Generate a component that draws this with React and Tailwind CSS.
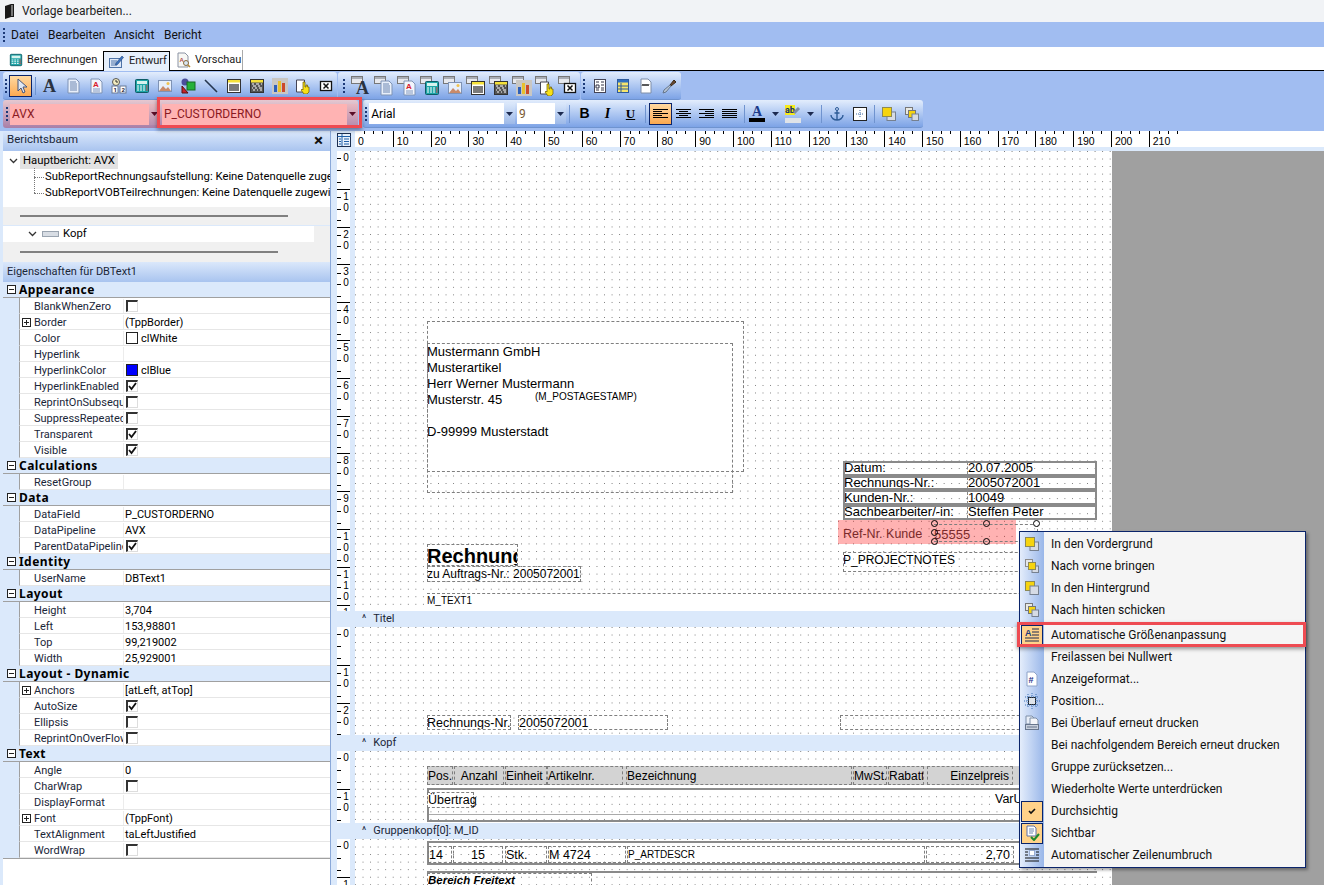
import { Fragment } from "react";

const ui = "[font-family:'Roboto',sans-serif]";
const arial = "[font-family:'Liberation_Sans',Arial,sans-serif]";

const G = {
  arrow: <path d="M5 1v12l3-3 2 5 2-1-2-5h4z" fill="#dfe7f3" stroke="#45557a" />,
  bigA: <text x="1" y="14" fontFamily="Liberation Serif" fontWeight="700" fontSize="18" fill="#2a3340">A</text>,
  memo: <><path d="M3 1h8l3 3v11H3z" fill="#e8effa" stroke="#7f93b5" /><path d="M5 4h6M5 6h7M5 8h7M5 10h7M5 12h7" stroke="#6d86b0" /></>,
  rtf: <><path d="M3 1h8l3 3v11H3z" fill="#f2f5fb" stroke="#7f93b5" /><text x="5" y="9" fontFamily="Liberation Sans" fontWeight="700" fontSize="8" fill="#d8202a">A</text><path d="M5 11h7M5 13h7" stroke="#8098c0" /></>,
  vars: <><circle cx="5" cy="4" r="3.5" fill="#f4edc0" stroke="#555" /><path d="M5 2v2h2" stroke="#333" fill="none" /><rect x="1" y="8" width="6" height="7" fill="#fff" stroke="#6a7a95" /><rect x="9" y="8" width="6" height="7" fill="#fff" stroke="#6a7a95" /><text x="2.5" y="14" fontSize="6" fontWeight="700" fill="#223">1</text><text x="10.5" y="14" fontSize="6" fontWeight="700" fill="#223">2</text></>,
  calc: <><rect x="1.5" y="1.5" width="13" height="13" rx="1" fill="#1fa6a8" stroke="#0d5c66" /><rect x="3" y="3" width="10" height="3" fill="#d7f3ee" /><path d="M3 8h2M6 8h2M9 8h2M3 10h2M6 10h2M9 10h2M3 12h2M6 12h2M9 12h2" stroke="#fff" /><path d="M12 8h1.5M12 10h1.5M12 12h1.5" stroke="#e33" /></>,
  image: <><rect x="1.5" y="2.5" width="13" height="11" fill="#e8f0fb" stroke="#7f93b5" /><path d="M2 13l4-5 3 3 2-2 3 4z" fill="#c98a6a" /><circle cx="11" cy="5.5" r="1.5" fill="#f1c24d" /></>,
  shape: <><circle cx="5" cy="4" r="3.5" fill="#4b4f9c" /><rect x="7" y="4" width="8" height="8" fill="#26b13a" stroke="#176a25" /><path d="M2 15V8l6 7z" fill="#c8242b" stroke="#5a1010" /></>,
  line: <path d="M2 2l12 12" stroke="#26364f" strokeWidth="1.6" />,
  barcode: <><rect x="1.5" y="1.5" width="13" height="13" fill="#fff" stroke="#333" /><rect x="2" y="2" width="12" height="2.5" fill="#f6e23a" /><path d="M4 6v7M6 6v7M8 6v7M10 6v7M12 6v7" stroke="#222" strokeWidth="1.2" /></>,
  code2d: <><rect x="1.5" y="1.5" width="13" height="13" fill="#555" stroke="#333" /><rect x="2" y="2" width="12" height="2.5" fill="#f6e23a" /><path d="M3 6h2M7 6h3M12 6h1M4 8h3M9 8h2M3 10h1M6 10h2M10 10h3M4 12h2M8 12h1M11 12h2" stroke="#fff" /></>,
  chart: <><rect x="0" y="0" width="16" height="16" fill="#c9c7c3" /><rect x="2" y="7" width="3" height="7" fill="#2e5fb8" /><rect x="6" y="3" width="3" height="11" fill="#e7c12e" /><rect x="10" y="5" width="3" height="9" fill="#cc4a2a" /></>,
  hand: <><path d="M1.5 2h8v12h-8z" fill="#fff" stroke="#445" /><path d="M8 4h2v5h1V7h1.5v2H14v5l-2 2H9l-3-4 1-1 1 1z" fill="#f7e017" stroke="#6a5a00" strokeWidth=".7" /></>,
  xbox: <><rect x="2.5" y="3.5" width="11" height="9" fill="#fff" stroke="#111" strokeWidth="1.3" /><path d="M5.5 5.5l5 5M10.5 5.5l-5 5" stroke="#111" strokeWidth="1.5" /></>,
  grid: <><rect x="2.5" y="1.5" width="11" height="13" fill="#fff" stroke="#445" /><path d="M4 4h3M4 7h3v3H4zM9 4h3M9 7h3M9 10h3M4 12h3M9 12h3" stroke="#334" fill="none" /></>,
  table: <><rect x="2.5" y="1.5" width="11" height="13" fill="#f7e56c" stroke="#2d5a9c" /><rect x="3" y="2" width="10" height="2.5" fill="#2f6fc2" /><path d="M6 5v9M3 8h10M3 11h10" stroke="#2d5a9c" /></>,
  wave: <><path d="M3 1h7l3 3v11H3z" fill="#fff" stroke="#7f8ea8" /><path d="M4 8l1-2 1 2 1-2 1 2 1-2 1 2 1-2" stroke="#333" fill="none" /></>,
  brush: <><path d="M9 7l4-5 2 2-5 4z" fill="#6b4a32" stroke="#3a2818" /><path d="M9 7l1 1-5 6-3 1 1-3z" fill="#b9c6d6" stroke="#66768c" /></>,
  front: <><rect x="6" y="6" width="8.5" height="8.5" fill="#d6dbe5" stroke="#76808f" /><rect x="1.5" y="1.5" width="9" height="9" fill="#f6d40f" stroke="#8d8a55" /></>,
  forward: <><rect x="1.5" y="1.5" width="7" height="7" fill="#e5e7ea" stroke="#8c8c8c" /><rect x="8" y="8" width="6.5" height="6.5" fill="#d6dbe5" stroke="#76808f" /><rect x="4.5" y="4.5" width="7" height="7" fill="#f6d40f" stroke="#8d8a55" /></>,
  back: <><rect x="1.5" y="1.5" width="9" height="9" fill="#f6d40f" stroke="#8d8a55" /><rect x="6" y="6" width="8.5" height="8.5" fill="#d6dbe5" stroke="#76808f" /></>,
  backward: <><rect x="1.5" y="1.5" width="7" height="7" fill="#e9e9e2" stroke="#777" /><rect x="4.5" y="4.5" width="7" height="7" fill="#f6d40f" stroke="#777" /><rect x="8" y="8" width="6.5" height="6.5" fill="#d6dbe5" stroke="#76808f" /></>,
  anchor: <><circle cx="8" cy="3" r="1.5" fill="none" stroke="#2d5b96" /><path d="M8 4.5V14M2 9c0 3 3 5 6 5s6-2 6-5M5.5 7h5" stroke="#2d5b96" strokeWidth="1.4" fill="none" /></>,
  border: <><rect x="1.5" y="1.5" width="13" height="13" fill="#fff" stroke="#222" /><path d="M8 4v8M4 8h8" stroke="#3a6aa8" strokeDasharray="1 1" /></>,
  autosize: <><text x="1" y="9" fontFamily="Liberation Sans" fontWeight="700" fontSize="9" fill="#1c3a78">A</text><path d="M8 2h7M8 5h7M8 8h7M1 11h14M1 14h14" stroke="#1c2a50" /></>,
  hash: <><path d="M3 1h7l3 3v11H3z" fill="#fff" stroke="#8fa4c8" /><text x="4.5" y="12" fontFamily="Liberation Sans" fontWeight="700" fontSize="9" fill="#1c2f88">#</text></>,
  pos: <><rect x="4.5" y="4.5" width="7" height="7" fill="#dfe4ea" stroke="#222" /><path d="M8 0v3M8 13v3M0 8h3M13 8h3M1 4h14M1 12h14M4 1v14M12 1v14" stroke="#3f72b5" strokeDasharray="1 1" /></>,
  print: <><path d="M2 1h6l2 2v6H2z" fill="#e8eef8" stroke="#7e90a8" /><path d="M6 3h6l2 2v5H6z" fill="#f3f5f9" stroke="#7e90a8" /><rect x="1.5" y="9.5" width="13" height="5" fill="#c8d0dc" stroke="#66758c" /><path d="M3 12h10" stroke="#66758c" /></>,
  check: <path d="M5 8l2 2 4-4" stroke="#111" strokeWidth="1.6" fill="none" />,
  visible: <><path d="M3 1h7l2 2v8H3z" fill="#fff" stroke="#5c70a8" /><path d="M5 4h5M5 6h5M5 8h4" stroke="#6d86b0" /><path d="M7 12l3 3 5-6" stroke="#1d8a2d" strokeWidth="2" fill="none" /></>,
  wrap: <><path d="M1 2h14M1 5h3M1 8h3M12 5h3M12 8h3M1 11h14M1 14h14" stroke="#111" /><rect x="5.5" y="3.5" width="5" height="5" fill="#fff" stroke="#5570a8" strokeDasharray="1 1" /></>,
  tree: <><rect x="1.5" y="1.5" width="13" height="13" fill="#e8f1fc" stroke="#1c2f50" /><path d="M6 2v12M1.5 4.5h13M8 7h5M8 9.5h5M8 12h5M3 7h2M3 9.5h2M3 12h2" stroke="#1f5fa8" /></>,
  edit: <><rect x="1.5" y="4.5" width="12" height="9" fill="#dfe9f8" stroke="#4f74a8" /><path d="M3 7h6M3 9h5M3 11h6" stroke="#4f74a8" /><path d="M8 9l6-7 1.5 1.5-6 7-2 .5z" fill="#3d74c0" stroke="#24467c" strokeWidth=".6" /></>,
  preview: <><path d="M3 1h7l3 3v11H3z" fill="#f7f7f4" stroke="#8b93a3" /><text x="4.5" y="10" fontFamily="Liberation Sans" fontWeight="700" fontSize="6" fill="#b24a4a">A</text><circle cx="11" cy="11" r="2.5" fill="#d7e6f5" stroke="#8a6a3a" /><path d="M13 13l2 2" stroke="#b5852f" strokeWidth="1.5" /></>,
};

function Ic({ n, size = 16 }) {
  return <svg viewBox="0 0 16 16" width={size} height={size} className="shrink-0">{G[n]}</svg>;
}

// field tools in the second group sit on a small grey tab
function DbIc({ n }) {
  return (
    <svg viewBox="0 0 20 20" width={20} height={20} className="shrink-0">
      <rect x="0.5" y="0.5" width="11" height="7" fill="#e7e9ee" stroke="#777" />
      <rect x="1" y="1" width="10" height="2" fill="#a9adb5" />
      <svg x="4" y="4" width="16" height="16" viewBox="0 0 16 16">{G[n]}</svg>
    </svg>
  );
}

function Grip({ className = "" }) {
  return (
    <div className={"flex flex-col gap-[2px] " + className}>
      <span className="w-[2px] h-[2px] bg-[#1c3a78]" />
      <span className="w-[2px] h-[2px] bg-[#1c3a78]" />
      <span className="w-[2px] h-[2px] bg-[#1c3a78]" />
      <span className="w-[2px] h-[2px] bg-[#1c3a78]" />
    </div>
  );
}

function Sep({ w = "w-[6px]" }) {
  return <div className={w + " flex justify-center shrink-0"}><span className="w-px h-[18px] bg-[#6f93cf]" /></div>;
}

function Cell({ children, w = "w-[23px]", on }) {
  return (
    <div className={w + " h-[22px] flex items-center justify-center shrink-0 " + (on ? "bg-gradient-to-b from-[#ffd9a0] to-[#fba94f] border border-[#0a246a]" : "")}>
      {children}
    </div>
  );
}

function Caret({ color = "#1c2a50" }) {
  return <svg width="7" height="4" viewBox="0 0 7 4"><path d="M0 0h7L3.5 4z" fill={color} /></svg>;
}

function Combo({ text, w, pink, orange }) {
  return (
    <div className={w + " h-[21px] flex items-center shrink-0 " + (pink ? "bg-[#ffb3b3] text-[#8a1a22]" : "bg-white")}>
      <span className={"flex-1 pl-[2px] text-[12px] " + (orange ? "text-[#7a5a30]" : "")}>{text}</span>
      <span className={"w-[11px] h-full flex items-center justify-center " + (pink ? "bg-gradient-to-b from-[#e8b8c0] to-[#b890b0]" : "bg-gradient-to-b from-[#dbe8fb] to-[#9db9e8]")}>
        <Caret color={pink ? "#5a0f28" : "#1c2a50"} />
      </span>
    </div>
  );
}

function Lines({ kind }) {
  const pos = { left: "items-start", center: "items-center", right: "items-end", full: "items-stretch" }[kind];
  return (
    <span className={"w-[15px] flex flex-col gap-[1px] " + pos}>
      {[15, 9, 15, 9, 15].map((w, i) => (
        <span key={i} className={"h-px bg-black " + (kind === "full" || w === 15 ? "w-[15px]" : "w-[9px]")} />
      ))}
    </span>
  );
}

function Toolbars() {
  const tb = "flex items-center rounded-[3px] bg-gradient-to-b from-[#e3edfc] to-[#7da3e6] border-b border-[#6f93cf]";
  return (
    <div className="h-[60px] shrink-0 bg-[#a1bdf1] pl-[3px] pt-px">
      <div className="flex h-[28px] gap-px">
        <div className={tb + " w-[334px] pl-[2px]"}>
          <Grip className="w-[4px]" />
          <Cell on><Ic n="arrow" /></Cell>
          <Sep />
          {["bigA", "memo", "rtf", "vars", "calc", "image", "shape", "line", "barcode", "code2d", "chart", "hand", "xbox"].map((n) => <Cell key={n}><Ic n={n} /></Cell>)}
        </div>
        <div className={tb + " w-[242px] pl-[5px]"}>
          <Grip className="w-[6px]" />
          {["bigA", "memo", "rtf", "calc", "image", "barcode", "code2d", "chart", "hand", "xbox"].map((n) => <Cell key={n}><DbIc n={n} /></Cell>)}
        </div>
        <div className={tb + " w-[100px] pl-[2px]"}>
          <Grip className="w-[5px]" />
          {["grid", "table", "wave", "brush"].map((n) => <Cell key={n}><Ic n={n} /></Cell>)}
        </div>
      </div>
      <div className="flex h-[28px]">
        <div className="flex items-center w-[355px] rounded-[3px] bg-gradient-to-b from-[#e6c8d0] to-[#a97fa8] pl-[3px] gap-[2px]">
          <Grip className="w-[2px]" />
          <Combo text="AVX" w="w-[150px]" pink />
          <Combo text="P_CUSTORDERNO" w="w-[196px]" pink />
        </div>
        <div className={tb + " ml-[5px] w-[560px] pl-[2px]"}>
          <Grip className="w-[5px]" />
          <Combo text="Arial" w="w-[146px]" />
          <div className="w-[2px]" />
          <Combo text="9" w="w-[49px]" orange />
          <Sep w="w-[7px]" />
          <Cell><b className={arial + " text-[14px] font-black"}>B</b></Cell>
          <Cell><i className="[font-family:'Liberation_Serif',serif] text-[14px] font-bold">I</i></Cell>
          <Cell><u className="[font-family:'Liberation_Serif',serif] text-[13px] font-bold">U</u></Cell>
          <Sep w="w-[7px]" />
          <Cell on><Lines kind="left" /></Cell>
          <Cell><Lines kind="center" /></Cell>
          <Cell><Lines kind="right" /></Cell>
          <Cell><Lines kind="full" /></Cell>
          <Sep />
          <Cell w="w-[20px]">
            <span className="flex flex-col items-center leading-none">
              <span className="[font-family:'Liberation_Serif',serif] font-bold text-[14px] text-[#1c3a8a] leading-[13px]">A</span>
              <span className="w-[16px] h-[4px] bg-black" />
            </span>
          </Cell>
          <Cell w="w-[16px]"><Caret /></Cell>
          <Cell w="w-[20px]">
            <span className="relative w-[16px] h-[18px] block">
              <span className="absolute left-0 top-0 bg-[#f6ea1a] text-[9px] leading-[10px] text-[#14306a] font-bold">ab</span>
              <span className="absolute left-0 bottom-0 w-[16px] h-[5px] bg-[#dfe3e8]" />
              <span className="absolute left-[8px] top-[4px] w-[7px] h-[3px] bg-[#7d8da5] -rotate-45" />
            </span>
          </Cell>
          <Cell w="w-[15px]"><Caret /></Cell>
          <Sep w="w-[7px]" />
          <Cell><Ic n="anchor" /></Cell>
          <Cell><Ic n="border" /></Cell>
          <Sep />
          <Cell><Ic n="front" /></Cell>
          <Cell><Ic n="backward" /></Cell>
        </div>
      </div>
    </div>
  );
}

function Check({ on }) {
  return (
    <span className="w-[12px] h-[12px] border-t-2 border-l-2 border-t-[#333] border-l-[#333] border-r border-b border-r-[#ddd] border-b-[#ddd] bg-white flex items-center justify-center">
      {on && <svg width="9" height="9" viewBox="0 0 9 9"><path d="M1 4l2.5 3L8 1" stroke="#111" strokeWidth="1.8" fill="none" /></svg>}
    </span>
  );
}

function PlusBox({ minus }) {
  return (
    <span className="w-[9px] h-[9px] border border-[#222] bg-white relative shrink-0">
      <span className="absolute left-px right-px top-[3px] h-px bg-[#222]" />
      {!minus && <span className="absolute top-px bottom-px left-[3px] w-px bg-[#222]" />}
    </span>
  );
}

const props = [
  { s: "Appearance" },
  { n: "BlankWhenZero", c: 0 },
  { n: "Border", v: "(TppBorder)", p: 1 },
  { n: "Color", v: "clWhite", sw: "bg-white" },
  { n: "Hyperlink" },
  { n: "HyperlinkColor", v: "clBlue", sw: "bg-[#0000ff]" },
  { n: "HyperlinkEnabled", c: 1 },
  { n: "ReprintOnSubsequent", c: 0 },
  { n: "SuppressRepeatedValues", c: 0 },
  { n: "Transparent", c: 1 },
  { n: "Visible", c: 1 },
  { s: "Calculations" },
  { n: "ResetGroup" },
  { s: "Data" },
  { n: "DataField", v: "P_CUSTORDERNO" },
  { n: "DataPipeline", v: "AVX" },
  { n: "ParentDataPipeline", c: 1 },
  { s: "Identity" },
  { n: "UserName", v: "DBText1" },
  { s: "Layout" },
  { n: "Height", v: "3,704" },
  { n: "Left", v: "153,98801" },
  { n: "Top", v: "99,219002" },
  { n: "Width", v: "25,929001" },
  { s: "Layout - Dynamic" },
  { n: "Anchors", v: "[atLeft, atTop]", p: 1 },
  { n: "AutoSize", c: 1 },
  { n: "Ellipsis", c: 0 },
  { n: "ReprintOnOverFlow", c: 0 },
  { s: "Text" },
  { n: "Angle", v: "0" },
  { n: "CharWrap", c: 0 },
  { n: "DisplayFormat" },
  { n: "Font", v: "(TppFont)", p: 1 },
  { n: "TextAlignment", v: "taLeftJustified" },
  { n: "WordWrap", c: 0 },
];

function PropGrid() {
  return (
    <div className="text-[11px] leading-[15px] border-b border-[#a0a0a0]">
      {props.map((r, i) =>
        r.s ? (
          <div key={i} className="h-[16px] bg-[#dbe9fb] flex items-center border-b border-[#a0a0a0] pl-[4px] gap-[3px]">
            <PlusBox minus />
            <b className="[font-family:'Noto_Sans',sans-serif] text-[12px] font-bold tracking-[0.45px]">{r.s}</b>
          </div>
        ) : (
          <div key={i} className="h-[16px] flex bg-[#dbe9fb]">
            <div className="w-[16px] shrink-0" />
            <div className="flex flex-1 bg-white border-l border-[#a0a0a0] border-b border-b-[#e6e6e6] min-w-0 pt-px">
              <div className="w-[104px] shrink-0 flex items-center overflow-hidden whitespace-nowrap border-r border-[#ececec] pl-[2px]">
                <span className="w-[12px] shrink-0 flex items-center">{r.p && <PlusBox />}</span>
                <span className="text-[#1a2638]">{r.n}</span>
              </div>
              <div className="flex-1 flex items-center pl-px gap-[3px] whitespace-nowrap">
                {r.c !== undefined && <span className="ml-px"><Check on={r.c === 1} /></span>}
                {r.sw && <span className="ml-px"><span className={"block w-[12px] h-[12px] border border-[#222] " + r.sw} /></span>}
                {r.v && <span>{r.v}</span>}
              </div>
            </div>
          </div>
        )
      )}
    </div>
  );
}

function PaneHeader({ children, close, size = "text-[11px]" }) {
  return (
    <div className={"h-[20px] shrink-0 flex items-center justify-between px-[4px] bg-gradient-to-b from-[#dbe8fb] to-[#a9c4ef] text-[#1a2638] " + size}>
      <span>{children}</span>
      {close && <span className="pr-[3px] text-[17px] font-bold leading-none text-[#111]">×</span>}
    </div>
  );
}

function LeftPane() {
  return (
    <div className="w-[331px] shrink-0 pl-[3px] bg-[#dbe9fb] border-r border-[#8aa8d8] flex flex-col overflow-hidden">
      <PaneHeader close size="text-[11.5px] pb-[2px]">Berichtsbaum</PaneHeader>
      <div className="relative h-[56px] shrink-0 bg-white text-[11.3px] leading-[16px] whitespace-nowrap overflow-hidden">
        <div className="flex items-center h-[16px] mt-[2px] pl-[6px]">
          <svg width="9" height="6" viewBox="0 0 9 6"><path d="M1 1l3.5 3.5L8 1" stroke="#333" strokeWidth="1.3" fill="none" /></svg>
          <span className="ml-[2px] bg-[#e2e2e2] px-[3px]">Hauptbericht: AVX</span>
        </div>
        <div className="pl-[42px]">SubReportRechnungsaufstellung: Keine Datenquelle zugewiesen</div>
        <div className="pl-[42px]">SubReportVOBTeilrechnungen: Keine Datenquelle zugewiesen</div>
        <span className="absolute left-[31px] top-[17px] h-[25px] border-l border-dotted border-[#777]" />
        <span className="absolute left-[31px] top-[26px] w-[10px] border-t border-dotted border-[#777]" />
        <span className="absolute left-[31px] top-[42px] w-[10px] border-t border-dotted border-[#777]" />
      </div>
      <div className="h-[19px] shrink-0 bg-[#f0f0f0] flex items-center pl-[17px] border-b border-[#dbe9fb]">
        <span className="w-[268px] h-[2px] bg-[#808080]" />
      </div>
      <div className="h-[16px] shrink-0 bg-[#f0f0f0]">
        <div className="w-[311px] h-full bg-white flex items-center pl-[25px] text-[11.3px]">
          <svg width="9" height="6" viewBox="0 0 9 6"><path d="M1 1l3.5 3.5L8 1" stroke="#333" strokeWidth="1.3" fill="none" /></svg>
          <span className="ml-[5px] w-[17px] h-[6px] bg-[#d8dde4] border border-[#9aa4b0]" />
          <span className="ml-[4px]">Kopf</span>
        </div>
      </div>
      <div className="h-[20px] shrink-0 bg-[#f0f0f0] flex items-center pl-[17px]">
        <span className="w-[258px] h-[2px] bg-[#808080]" />
      </div>
      <PaneHeader>Eigenschaften für DBText1</PaneHeader>
      <div className="flex-1 bg-white overflow-hidden"><PropGrid /></div>
    </div>
  );
}

function VRuler({ count }) {
  return (
    <div className="w-[24px] shrink-0 bg-[#dbe9fb] overflow-hidden pl-[6px] pr-[5px]">
      <div className="bg-white h-full overflow-hidden">
        {Array.from({ length: count }, (_, i) => (
          <div key={i} className={"h-[37.8px] flex " + (i > 0 ? "border-t border-black" : "")}>
            <div className="w-[5px] flex flex-col justify-around pt-[2px]">
              <span className="w-[4px] h-px bg-black" />
              <span className="w-[4px] h-px bg-black" />
              <span className="w-[4px] h-px bg-black" />
            </div>
            <div className={arial + " flex-1 flex flex-col items-center pt-[1px] text-[10px] leading-[11px] text-black"}>
              {String(i * 10).split("").map((d, j) => <span key={j}>{d}</span>)}
            </div>
          </div>
        ))}
      </div>
    </div>
  );
}

function HRuler() {
  return (
    <div className="h-[20px] shrink-0 bg-[#dbe9fb] flex">
      <div className="w-[24px] shrink-0 pl-[5px] pt-[1px]"><Ic n="tree" /></div>
      <div className="flex-1 h-[16px] bg-white flex overflow-hidden">
        {Array.from({ length: 22 }, (_, i) => (
          <div key={i} className={"w-[37.8px] shrink-0 relative " + (i > 0 ? "border-l border-black" : "")}>
            <span className="absolute left-[9px] top-0 w-px h-[3px] bg-black" />
            <span className="absolute left-[18px] top-0 w-px h-[3px] bg-black" />
            <span className="absolute left-[27px] top-0 w-px h-[3px] bg-black" />
            <span className={arial + " absolute left-[3px] top-[4px] text-[10.5px] leading-[12px] text-black"}>{i * 10}</span>
          </div>
        ))}
      </div>
    </div>
  );
}

function BandHead({ children }) {
  return (
    <div className="h-[16px] w-[781px] shrink-0 bg-[#dbe9fb] flex items-center pl-[31px] text-[11px] text-[#1a2638] gap-[7px]">
      <span className="text-[10px] leading-none">^</span>
      <span>{children}</span>
    </div>
  );
}

const dots = "bg-white bg-[radial-gradient(circle_at_0.5px_0.5px,#777_0.5px,transparent_0.6px)] bg-[length:7.56px_7.56px]";
const dash = "border border-dashed border-[#7f7f7f]";

// fields on the report page are placed at their own coordinates
function F({ className = "", children }) {
  return <div className={"absolute whitespace-nowrap overflow-hidden text-black " + arial + " " + className}>{children}</div>;
}

function Band({ h, rulers, children }) {
  return (
    <div className={"flex w-[781px] shrink-0 overflow-hidden " + h}>
      <VRuler count={rulers} />
      <div className={"relative flex-1 " + dots}>{children}</div>
    </div>
  );
}

function InfoRow({ a, b }) {
  return (
    <div className="h-[14.7px] border-2 border-[#8a8a8a] flex items-center text-[13px] leading-[12px] overflow-hidden whitespace-nowrap">
      <span className="w-[124px] shrink-0 border-r border-dashed border-[#888] -ml-px">{a}</span>
      <span>{b}</span>
    </div>
  );
}

function Handle({ className }) {
  return <span className={"absolute w-[7px] h-[7px] rounded-full border border-black " + className} />;
}

function Canvas() {
  return (
    <div className="flex-1 min-w-0 flex flex-col overflow-hidden">
      <HRuler />
      <div className="flex-1 bg-[#a0a0a0] flex flex-col overflow-hidden">
        <Band h="h-[460px]" rulers={13}>
          <F className={"left-[72px] top-[170px] w-[317px] h-[151px] bg-white " + dash} />
          <F className={"left-[72px] top-[192px] w-[306px] h-[150px] text-[13px] leading-[16px] " + dash}>
            <div className="-ml-px">Mustermann GmbH<br />Musterartikel<br />Herr Werner Mustermann<br />Musterstr. 45<br /><br />D-99999 Musterstadt</div>
          </F>
          <F className="left-[180px] top-[239px] text-[10px] leading-[14px]">(M_POSTAGESTAMP)</F>
          <F className={"left-[72px] top-[393px] w-[91px] h-[22px] text-[20px] leading-[22px] font-bold [text-indent:-1px] " + dash}>Rechnung</F>
          <F className={"left-[72px] top-[415px] w-[154px] h-[16px] text-[12px] leading-[15px] [text-indent:-1px] " + dash}>zu Auftrags-Nr.: 2005072001</F>
          <F className="left-[72px] top-[442px] w-[685px] h-[18px] bg-white border-t border-dashed border-[#7f7f7f] text-[10px] leading-[14px]">M_TEXT1</F>

          <div className={"absolute left-[488px] top-[310px] w-[254px] flex flex-col text-black " + arial}>
            <InfoRow a="Datum:" b="20.07.2005" />
            <InfoRow a="Rechnungs-Nr.:" b="2005072001" />
            <InfoRow a="Kunden-Nr.:" b="10049" />
            <InfoRow a="Sachbearbeiter/-in:" b="Steffen Peter" />
          </div>
          <F className="left-[483px] top-[369px] w-[178px] h-[24px] bg-[#ff0000]/30 text-[12.5px] leading-[28px] pl-[5px] !text-[#7a2a2a]">Ref-Nr. Kunde</F>
          <F className="left-[579px] top-[373px] w-[104px] h-[18px] text-[13px] leading-[19px] !text-[#7a2a2a] border-t border-b border-r border-dashed border-[#7f7f7f]">55555</F>
          <Handle className="left-[576px] top-[369px]" />
          <Handle className="left-[628px] top-[369px]" />
          <Handle className="left-[576px] top-[378px]" />
          <Handle className="left-[576px] top-[387px]" />
          <Handle className="left-[628px] top-[387px]" />
          <Handle className="left-[678px] top-[369px] bg-white" />
          <F className={"left-[488px] top-[401px] w-[200px] h-[20px] text-[12px] leading-[15px] [text-indent:-1px] " + dash}>P_PROJECTNOTES</F>
        </Band>

        <BandHead>Titel</BandHead>
        <Band h="h-[108px]" rulers={3}>
          <F className={"left-[72px] top-[88px] w-[84px] h-[15px] bg-white text-[12.5px] leading-[14px] [text-indent:-1px] " + dash}>Rechnungs-Nr.:</F>
          <F className={"left-[163px] top-[88px] w-[150px] h-[15px] bg-white text-[12.5px] leading-[14px] " + dash}>2005072001</F>
          <F className={"left-[485px] top-[88px] w-[200px] h-[15px] " + dash} />
        </Band>

        <BandHead>Kopf</BandHead>
        <Band h="h-[72px]" rulers={2}>
          <div className={"absolute left-[72px] top-[15px] w-[670px] h-[19px] bg-[#d3d3d3] text-[12px] leading-[18px] text-black " + arial}>
            {[
              ["Pos.", "left-0 w-[26px]"],
              ["Anzahl", "left-[27px] w-[50px] text-center"],
              ["Einheit", "left-[78px] w-[42px]"],
              ["Artikelnr.", "left-[120px] w-[76px]"],
              ["Bezeichnung", "left-[199px] w-[226px]"],
              ["MwSt.", "left-[426px] w-[34px]"],
              ["Rabatt", "left-[461px] w-[36px]"],
              ["Einzelpreis", "left-[500px] w-[86px] text-right pr-[3px]"],
            ].map(([t, c]) => (
              <span key={t} className={"absolute top-0 h-[19px] whitespace-nowrap overflow-hidden " + dash + " " + c}>{t}</span>
            ))}
          </div>
          <div className={"absolute left-[72px] top-[37px] w-[670px] h-[34px] border-2 border-[#8a8a8a] text-black text-[12.5px] leading-[15px] " + arial}>
            <span className={"absolute left-[-2px] top-[2px] w-[47px] h-[16px] bg-white " + dash}>Übertrag</span>
            <span className="absolute left-[566px] top-[2px] bg-white">VarU</span>
            <span className="absolute left-0 right-0 top-[24px] h-px bg-[#aaa]" />
          </div>
        </Band>

        <BandHead>Gruppenkopf[0]: M_ID</BandHead>
        <Band h="h-[46px]" rulers={2}>
          <div className={"absolute left-[72px] top-[2px] w-[670px] h-[24px] border-2 border-[#8a8a8a] text-black text-[12.5px] leading-[16px] " + arial}>
            {[
              ["14", "left-[-1px] w-[24px]"],
              ["15", "left-[24px] w-[50px] text-center"],
              ["Stk.", "left-[76px] w-[42px]"],
              ["M 4724", "left-[119px] w-[78px]"],
              ["P_ARTDESCR", "left-[198px] w-[298px] bg-white text-[10px]"],
              ["2,70", "left-[497px] w-[88px] text-right pr-[3px]"],
            ].map(([t, c]) => (
              <span key={t} className={"absolute top-[3px] h-[17px] overflow-hidden whitespace-nowrap " + dash + " " + c}>{t}</span>
            ))}
          </div>
          <span className="absolute left-[72px] top-[32px] w-[670px] h-[2px] bg-[#8a8a8a]" />
          <F className={"left-[72px] top-[34px] w-[165px] h-[14px] text-[11.5px] leading-[13px] font-bold italic " + dash}>Bereich Freitext</F>
        </Band>
      </div>
    </div>
  );
}

const menuItems = [
  ["front", "In den Vordergrund"],
  ["forward", "Nach vorne bringen"],
  ["back", "In den Hintergrund"],
  ["backward", "Nach hinten schicken"],
  ["autosize", "Automatische Größenanpassung", "hl"],
  [null, "Freilassen bei Nullwert"],
  ["hash", "Anzeigeformat..."],
  ["pos", "Position..."],
  ["print", "Bei Überlauf erneut drucken"],
  [null, "Bei nachfolgendem Bereich erneut drucken"],
  [null, "Gruppe zurücksetzen..."],
  [null, "Wiederholte Werte unterdrücken"],
  ["check", "Durchsichtig", "on"],
  ["visible", "Sichtbar", "on"],
  ["wrap", "Automatischer Zeilenumbruch"],
];

function ContextMenu() {
  return (
    <div className={"absolute left-[1019px] top-[531px] w-[287px] h-[337px] bg-[#f5f5f5] border border-[#0a246a] shadow-[2px_2px_3px_rgba(0,0,0,0.35)] py-px text-[12px] text-[#111] " + ui}>
      <div className="absolute left-0 top-0 bottom-0 w-[24px] bg-gradient-to-r from-[#e4edfb] to-[#9ab7e9]" />
      {menuItems.map(([icon, label, mode]) => (
        <Fragment key={label}>
          {mode === "hl" && <div className="h-[3px]" />}
          <div className="relative h-[22px] flex items-center">
            <div className="w-[24px] h-full flex items-center justify-center shrink-0">
              {icon && (
                <span className={"w-[22px] h-[21px] flex items-center justify-center " + (mode ? "bg-[#ffd28a] border border-[#0a246a]" : "")}>
                  <Ic n={icon} />
                </span>
              )}
            </div>
            <span className="ml-[7px] whitespace-nowrap">{label}</span>
          </div>
        </Fragment>
      ))}
    </div>
  );
}

export default function App() {
  return (
    <div className={"relative w-[1324px] h-[885px] overflow-hidden flex flex-col bg-white text-black " + ui}>
      <div className="h-[22px] shrink-0 bg-[#f1f3f6] flex items-center pl-[5px] gap-[8px] text-[12px]">
        <svg width="9" height="15" viewBox="0 0 9 15" className="shrink-0"><path d="M0 2l6-2h3v13H6l-6 2z" fill="#1a1a1a" /><path d="M6 1h2v11H6z" fill="#777" /></svg>
        <span className="text-[#222]">Vorlage bearbeiten...</span>
      </div>
      <div className="h-[25px] shrink-0 bg-[#a1bdf1] flex items-center pl-[3px] text-[12px] text-[#111]">
        <Grip className="w-[8px]" />
        <span className="w-[37px]">Datei</span>
        <span className="w-[66px]">Bearbeiten</span>
        <span className="w-[50px]">Ansicht</span>
        <span>Bericht</span>
      </div>
      <div className="h-[24px] shrink-0 bg-white border-b border-black flex items-end text-[11px] text-[#222] pl-[9px]">
        <div className="h-[20px] flex items-center gap-[4px] w-[94px]"><Ic n="calc" size={14} />Berechnungen</div>
        <div className="h-[20px] -mb-px w-[67px] flex items-center gap-[5px] pl-[4px] bg-[#e6effb] border border-b-0 border-black"><Ic n="edit" />Entwurf</div>
        <div className="h-[20px] w-[73px] flex items-center gap-[4px] pl-[5px] border-r border-[#aaa]"><Ic n="preview" />Vorschau</div>
      </div>
      <Toolbars />
      <div className="flex-1 flex min-h-0 bg-[#a1bdf1]">
        <LeftPane />
        <Canvas />
      </div>

      <div className="absolute left-[157px] top-[97px] w-[205px] h-[31px] border-[3px] border-[#ee4b52] shadow-[0_2px_4px_rgba(0,0,0,0.4)]" />
      <ContextMenu />
      <div className="absolute left-[1017px] top-[622px] w-[289px] h-[25px] border-[3px] border-[#ee4b52] shadow-[0_2px_4px_rgba(0,0,0,0.4)]" />
    </div>
  );
}
